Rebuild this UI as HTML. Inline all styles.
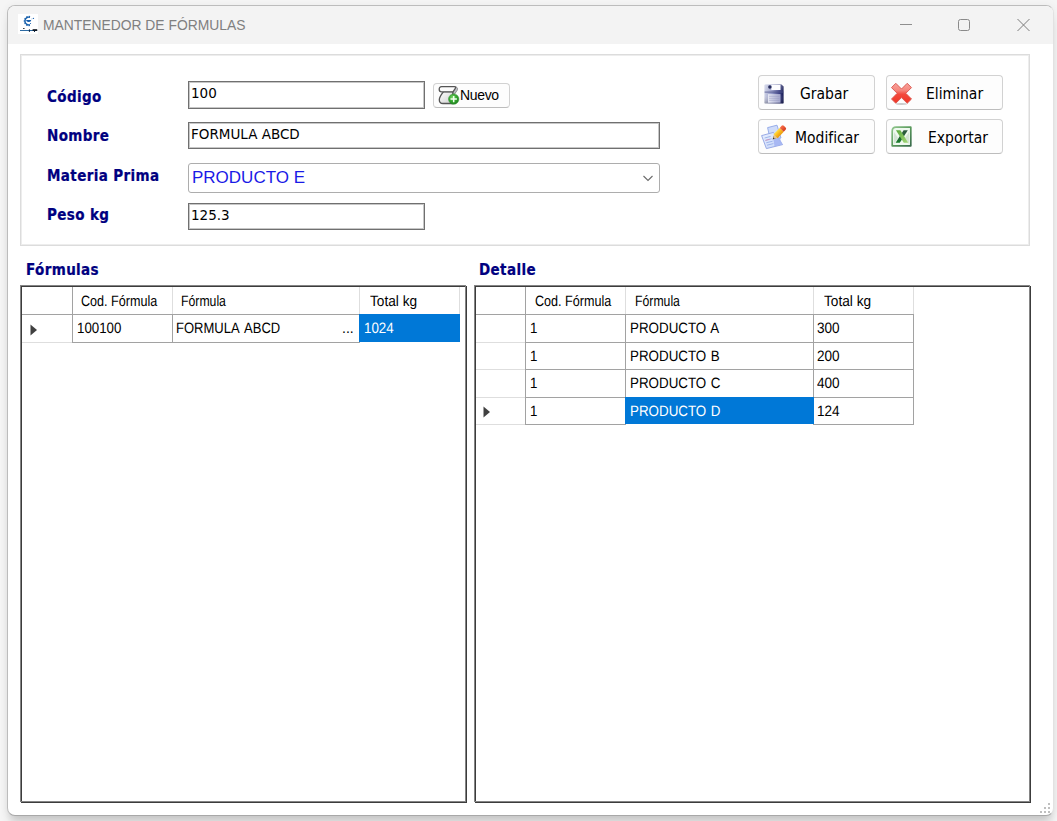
<!DOCTYPE html>
<html lang="es">
<head>
<meta charset="utf-8">
<title>MANTENEDOR DE FÓRMULAS</title>
<style>
html,body{margin:0;padding:0;}
body{width:1057px;height:821px;position:relative;overflow:hidden;background:#f5f5f5;font-family:"Liberation Sans",sans-serif;}
.abs{position:absolute;}
#win{position:absolute;left:7px;top:5px;width:1047px;height:811px;box-sizing:border-box;border:1px solid #bcbcbc;border-right-color:#e2e2e2;border-bottom-color:#a8a8a8;border-radius:8px;background:#fff;overflow:hidden;box-shadow:0 0 8px rgba(0,0,0,.05),0 10px 10px -3px rgba(0,0,0,.17);}
#titlebar{position:absolute;left:0;top:0;width:1045px;height:38px;background:#f3f3f3;}
#title{position:absolute;left:42.7px;top:15px;height:20px;line-height:20px;font-size:15.4px;transform:scaleX(.9);transform-origin:0 50%;color:#808080;white-space:nowrap;}
.tah{font-family:"DejaVu Sans Condensed","DejaVu Sans","Liberation Sans",sans-serif;}
.lbl{position:absolute;font-family:"DejaVu Sans Condensed","DejaVu Sans","Liberation Sans",sans-serif;font-weight:bold;color:#000080;font-size:15px;letter-spacing:.38px;-webkit-text-stroke:.22px #000080;line-height:20px;height:20px;white-space:nowrap;}
.tb{position:absolute;box-sizing:border-box;border:1px solid #707070;background:#fff;box-shadow:inset 0 0 0 1px rgba(0,0,0,.22);}
.tbt{position:absolute;font-family:"DejaVu Sans","Liberation Sans",sans-serif;font-size:13.5px;line-height:20px;height:20px;color:#000;white-space:nowrap;}
.btn{position:absolute;box-sizing:border-box;border:1px solid #d2d2d2;border-bottom-color:#bdbdbd;border-radius:4px;background:#fdfdfd;}
.btt{position:absolute;font-family:"DejaVu Sans Condensed","DejaVu Sans","Liberation Sans",sans-serif;font-size:15.5px;line-height:20px;height:20px;color:#000;white-space:nowrap;}
.grid{position:absolute;box-sizing:border-box;border:1px solid #3c3c3c;background:#fff;}
.grid2{position:absolute;box-sizing:border-box;border:1px solid #858585;background:transparent;}
.gt{position:absolute;font-size:15px;text-rendering:geometricPrecision;line-height:18px;height:18px;color:#000;white-space:nowrap;transform-origin:0 50%;}
.hl{position:absolute;height:1px;background:#a0a0a0;}
.vl{position:absolute;width:1px;background:#a0a0a0;}
.hll{position:absolute;height:1px;background:#dadada;}
.vll{position:absolute;width:1px;background:#dadada;}
</style>
</head>
<body>
<div id="win">
  <div id="titlebar"></div>
</div>
<!-- title bar contents (page coordinates) -->
<svg class="abs" style="left:18px;top:14px" width="20" height="20" viewBox="0 0 20 20">
  <rect width="20" height="20" fill="#fff"/>
  <path d="M11.9 3.25 A3.9 3.9 0 1 0 11.9 10.75" stroke="#1c63ad" stroke-width="1.3" fill="none"/>
  <path d="M12 2.85 A4.3 4.3 0 1 0 12 11.15" stroke="#1c63ad" stroke-width="1.7" fill="none" stroke-dasharray="1.3 1.0"/>
  <path d="M8 5.9 H13.3 Q12.8 8.1 10.4 8.1 Q8.6 8 8 5.9Z" fill="#145cab"/>
  <circle cx="15.4" cy="4.4" r=".7" fill="#2a6cb4"/><circle cx="13.8" cy="4.9" r=".45" fill="#5a90c8"/>
  <circle cx="12.5" cy="9.5" r=".6" fill="#1c63ad"/>
  <rect x="2" y="16" width="17.2" height="1" fill="#2c6aa2"/>
  <rect x="14.6" y="15.2" width="4.6" height="1.7" fill="#0a0e16"/>
  <rect x="10.9" y="15.4" width="1.1" height="2.4" fill="#0e2a4a"/>
  <rect x="16" y="16.8" width="1" height="1.2" fill="#0e2a4a"/>
  <rect x="5" y="14" width="1.6" height=".8" fill="#10151c"/>
</svg>
<div id="title">MANTENEDOR DE FÓRMULAS</div>
<svg class="abs" style="left:890px;top:10px" width="150" height="30" viewBox="0 0 150 30">
  <path d="M10 14.5 H22" stroke="#8e8e8e" stroke-width="1" fill="none"/>
  <rect x="68.5" y="9.5" width="11" height="11" rx="2" ry="2" stroke="#8a8a8a" stroke-width="1" fill="none"/>
  <path d="M127.5 9 L139.5 21 M139.5 9 L127.5 21" stroke="#7c7c7c" stroke-width="1" fill="none"/>
</svg>

<!-- top panel -->
<div class="abs" style="left:20px;top:54px;width:1010px;height:192px;box-sizing:border-box;border:1px solid #dcdcdc;box-shadow:inset 0 0 0 1px #ededed;"></div>

<div class="lbl" style="left:47px;top:87px">Código</div>
<div class="lbl" style="left:47px;top:126px">Nombre</div>
<div class="lbl" style="left:47px;top:166px">Materia Prima</div>
<div class="lbl" style="left:47px;top:205px">Peso kg</div>

<div class="tb" style="left:188px;top:81px;width:237px;height:28px"></div>
<div class="tbt" style="left:191px;top:83px">100</div>
<div class="tb" style="left:188px;top:122px;width:472px;height:27px"></div>
<div class="tbt" style="left:191px;top:124px">FORMULA ABCD</div>
<div class="abs" style="left:188px;top:163px;width:472px;height:30px;box-sizing:border-box;border:1px solid #adadad;border-radius:3px;background:#fff"></div>
<div class="abs" style="left:192px;top:167px;font-size:17px;line-height:22px;height:22px;color:#1a1ae6;white-space:nowrap">PRODUCTO E</div>
<svg class="abs" style="left:640px;top:170px" width="16" height="16" viewBox="0 0 16 16"><path d="M3.5 6 L8 10.5 L12.5 6" stroke="#6a6a6a" stroke-width="1.1" fill="none"/></svg>
<div class="tb" style="left:188px;top:203px;width:237px;height:27px"></div>
<div class="tbt" style="left:191px;top:205px">125.3</div>

<!-- Nuevo button -->
<div class="btn" style="left:433px;top:83px;width:77px;height:25px"></div>
<svg class="abs" style="left:437px;top:85px" width="24" height="22" viewBox="0 0 24 22">
  <defs><radialGradient id="gp" cx=".4" cy=".35" r=".75"><stop offset="0" stop-color="#7ad868"/><stop offset=".5" stop-color="#32a52e"/><stop offset="1" stop-color="#1b7a1b"/></radialGradient>
  <linearGradient id="sc" x1="0" y1="0" x2="1" y2="1"><stop offset="0" stop-color="#ffffff"/><stop offset="1" stop-color="#cfcfcf"/></linearGradient></defs>
  <path d="M17.4 1.6 C20.6 1.4 21.4 4.4 19.6 6.2 L16.6 10.4 L14.2 7.4 Z" fill="#b9bcc2" stroke="#7a7a7a" stroke-width=".8" stroke-linejoin="round"/>
  <path d="M6.6 6.6 C4.6 9 2.3 12 2.3 14.7 C2.3 17.1 3.9 18.5 6 18.5 H16 L15.8 6.6 Z" fill="url(#sc)" stroke="#555" stroke-width="1.3" stroke-linejoin="round"/>
  <path d="M4.6 1.6 H17.6 C19 1.6 18.6 3.2 17.8 4.2 L16 6.8 H4.6 C1.4 6.8 1.4 1.6 4.6 1.6 Z" fill="#fcfcfc" stroke="#555" stroke-width="1.3" stroke-linejoin="round"/>
  <circle cx="16.7" cy="14.1" r="5.2" fill="url(#gp)" stroke="#2a8a2a" stroke-width=".5"/>
  <path d="M16.7 10.9 V17.3 M13.5 14.1 H19.9" stroke="#f2fff0" stroke-width="1.5"/>
</svg>
<div class="abs" style="left:460px;top:86px;font-size:14px;letter-spacing:-.35px;line-height:18px;height:18px;white-space:nowrap;color:#000">Nuevo</div>

<!-- right buttons -->
<div class="btn" style="left:758px;top:75px;width:117px;height:35px"></div>
<div class="btn" style="left:886px;top:75px;width:117px;height:35px"></div>
<div class="btn" style="left:758px;top:119px;width:117px;height:35px"></div>
<div class="btn" style="left:886px;top:119px;width:117px;height:35px"></div>
<div class="btt" style="left:800px;top:84px">Grabar</div>
<div class="btt" style="left:926px;top:84px">Eliminar</div>
<div class="btt" style="left:795px;top:128px">Modificar</div>
<div class="btt" style="left:928px;top:128px">Exportar</div>


<!-- button icons -->
<svg class="abs" style="left:764px;top:84px" width="20" height="20" viewBox="0 0 20 20">
  <defs>
    <linearGradient id="fl" x1="0" y1="0" x2="1" y2="0"><stop offset="0" stop-color="#cdd1e6"/><stop offset=".4" stop-color="#9096c4"/><stop offset=".78" stop-color="#3b4084"/><stop offset="1" stop-color="#141850"/></linearGradient>
    <linearGradient id="fs" x1="0" y1="0" x2="1" y2="0"><stop offset="0" stop-color="#e6e8f3"/><stop offset="1" stop-color="#a3a6cc"/></linearGradient>
    <linearGradient id="fv" x1="0" y1="0" x2="0" y2="1"><stop offset="0" stop-color="#fff" stop-opacity=".25"/><stop offset=".5" stop-color="#fff" stop-opacity="0"/><stop offset="1" stop-color="#000" stop-opacity=".25"/></linearGradient>
  </defs>
  <path d="M1.6 .4 H17.4 L19.6 2.4 V18.4 Q19.6 19.6 18.4 19.6 H1.6 Q.4 19.6 .4 18.4 V1.6 Q.4 .4 1.6 .4Z" fill="url(#fl)"/>
  <path d="M1.6 .4 H17.4 L19.6 2.4 V18.4 Q19.6 19.6 18.4 19.6 H1.6 Q.4 19.6 .4 18.4 V1.6 Q.4 .4 1.6 .4Z" fill="url(#fv)"/>
  <rect x="7.3" y=".9" width="9.2" height="5.1" fill="#fdfdff"/>
  <circle cx="5.9" cy="2.9" r="1.75" fill="#262c5c"/>
  <rect x=".6" y="7.3" width="18.8" height="1.7" fill="#4a4f8a" opacity=".45"/>
  <rect x="4" y="10.1" width="12.5" height="8.6" fill="url(#fs)"/>
  <path d="M5 12.3 H15.5 M5 14.3 H15.5 M5 16.3 H15.5" stroke="#8a8db8" stroke-width=".6" opacity=".7"/>
</svg>
<svg class="abs" style="left:891px;top:83px" width="22" height="23" viewBox="0 0 22 23">
  <defs>
    <linearGradient id="rx" x1="0" y1="0" x2="0" y2="1"><stop offset="0" stop-color="#f7a39c"/><stop offset=".35" stop-color="#f6867c"/><stop offset=".55" stop-color="#f4493c"/><stop offset="1" stop-color="#ee3526"/></linearGradient>
  </defs>
  <ellipse cx="10.5" cy="21" rx="5.5" ry=".9" fill="#707070" opacity=".35"/>
  <path transform="translate(.5,.3)" d="M0 4.3 L4.3 0 L10 5.7 L15.7 0 L20 4.3 L14.3 10 L20 15.7 L15.7 20 L10 14.3 L4.3 20 L0 15.7 L5.7 10 Z" fill="url(#rx)" stroke="#d9544c" stroke-width=".9" stroke-linejoin="round"/>
</svg>
<svg class="abs" style="left:760px;top:124px" width="28" height="27" viewBox="0 0 28 27">
  <defs>
    <linearGradient id="pg" x1="0" y1="0" x2="1" y2="1"><stop offset="0" stop-color="#eaf1ff"/><stop offset="1" stop-color="#c2d2f8"/></linearGradient>
    <linearGradient id="py" x1="0" y1="0" x2="0" y2="1"><stop offset="0" stop-color="#ffe04a"/><stop offset=".5" stop-color="#fbb81c"/><stop offset="1" stop-color="#e89a10"/></linearGradient>
    <linearGradient id="pe" x1="0" y1="0" x2="0" y2="1"><stop offset="0" stop-color="#f8714c"/><stop offset="1" stop-color="#d43a1c"/></linearGradient>
  </defs>
  <path d="M7.6 3.6 L17 1.2 L21 14 L10.4 16.4 Z" fill="#cfdcfa" stroke="#8fa6e6" stroke-width=".9" stroke-linejoin="round"/>
  <path d="M1.6 11.6 L13.4 8.4 L22.6 20.6 L6.4 24.6 Z" fill="url(#pg)" stroke="#8fa2e2" stroke-width=".9" stroke-linejoin="round"/>
  <path d="M13 13.4 L19.4 13 L22.4 20.4 L14.6 22.4 Z" fill="#a3b4f2" opacity=".9"/>
  <path d="M4.6 14 L10.6 12.4 M5.4 16.4 L11.6 14.8 M6.2 18.8 L12.6 17.2 M7 21.2 L13.4 19.6" stroke="#8fa8e6" stroke-width=".8"/>
  <path d="M5.4 16.4 L9.6 15.3" stroke="#d78fb0" stroke-width=".8"/>
  <g transform="translate(12.6,15.4) rotate(-46.5)">
    <path d="M0 0 L3.2 -1.6 V1.6 Z" fill="#3c3a2c"/>
    <path d="M2 -1 L4.6 -2.7 V2.7 L2 1 Z" fill="#e6c48c"/>
    <rect x="4.4" y="-2.8" width="8.8" height="5.6" fill="url(#py)"/>
    <path d="M13.2 -2.8 H16 Q17.6 -2.8 17.6 -1.2 V1.2 Q17.6 2.8 16 2.8 H13.2 Z" fill="url(#pe)"/>
  </g>
</svg>
<svg class="abs" style="left:891px;top:126px" width="21" height="21" viewBox="0 0 21 21">
  <defs>
    <linearGradient id="xf" x1="0" y1="0" x2="1" y2="1"><stop offset="0" stop-color="#8fc58c"/><stop offset=".5" stop-color="#5a9a5c"/><stop offset="1" stop-color="#3a6b4c"/></linearGradient>
    <linearGradient id="xl" x1="0" y1="0" x2="1" y2="1"><stop offset="0" stop-color="#5aa83c"/><stop offset="1" stop-color="#a4d878"/></linearGradient>
    <linearGradient id="xd" x1="0" y1="0" x2="0" y2="1"><stop offset="0" stop-color="#2f5a40"/><stop offset=".5" stop-color="#235f33"/><stop offset="1" stop-color="#18802a"/></linearGradient>
  </defs>
  <path d="M1.2 19.8 V5 Q1.2 1.2 5 1.2 H19.8 V19.8 Z" fill="#eff9ef" stroke="url(#xf)" stroke-width="1.7" stroke-linejoin="round"/>
  <path d="M3 6 L7 12 L3 18 Z M18 6 L14 12 L18 18 Z" fill="#c8dcc8" opacity=".7"/>
  <path d="M12.6 4.2 H16.8 L8.8 16.8 H4.6 Z" fill="url(#xd)"/>
  <path d="M5 4.2 H9.4 L17.2 16.8 H12.8 Z" fill="url(#xl)"/>
</svg>
<!-- section labels -->
<div class="lbl" style="left:26px;top:260px">Fórmulas</div>
<div class="lbl" style="left:479px;top:260px">Detalle</div>

<!-- left grid -->
<div class="grid" style="left:21px;top:286px;width:446px;height:517px"></div><div class="grid2" style="left:20px;top:285px;width:446px;height:517px"></div>
<!-- right grid -->
<div class="grid" style="left:475px;top:286px;width:556px;height:517px"></div><div class="grid2" style="left:474px;top:285px;width:556px;height:517px"></div>
<!-- left grid contents -->
<div class="abs" style="left:22px;top:314px;width:438px;height:1px;background:#a2a2a2"></div>
<div class="abs" style="left:22px;top:342px;width:50px;height:1px;background:#dedede"></div>
<div class="abs" style="left:72px;top:342px;width:287px;height:1px;background:#a2a2a2"></div>
<div class="abs" style="left:72px;top:287px;width:1px;height:56px;background:#a2a2a2"></div>
<div class="abs" style="left:172px;top:287px;width:1px;height:27px;background:#dedede"></div>
<div class="abs" style="left:172px;top:314px;width:1px;height:29px;background:#a2a2a2"></div>
<div class="abs" style="left:359px;top:287px;width:1px;height:27px;background:#dedede"></div>
<div class="abs" style="left:359px;top:314px;width:1px;height:29px;background:#a2a2a2"></div>
<div class="abs" style="left:459px;top:287px;width:1px;height:27px;background:#dedede"></div>
<div class="abs" style="left:359px;top:314px;width:101px;height:28px;background:#0078d7"></div>
<svg class="abs" style="left:30px;top:324px" width="8" height="12" viewBox="0 0 8 12"><path d="M0.5 0.5 L7 6 L0.5 11.5 Z" fill="#404040"/></svg>
<div class="gt" style="left:81px;top:293px;color:#000;transform:scaleX(0.84)">Cod. Fórmula</div>
<div class="gt" style="left:180.5px;top:293px;color:#000;transform:scaleX(0.8167)">Fórmula</div>
<div class="gt" style="left:370px;top:293px;color:#000;transform:scaleX(0.91)">Total kg</div>
<div class="gt" style="left:77px;top:320px;color:#000;transform:scaleX(0.8867)">100100</div>
<div class="gt" style="left:176px;top:320px;color:#000;word-spacing:2.5px;transform:scaleX(0.868)">FORMULA ABCD</div>
<div class="gt" style="left:341.5px;top:320px;color:#000;transform:scaleX(0.9333)">...</div>
<div class="gt" style="left:364px;top:320px;color:#fff;transform:scaleX(0.8913)">1024</div>
<!-- right grid contents -->
<div class="abs" style="left:476px;top:314px;width:438px;height:1px;background:#a2a2a2"></div>
<div class="abs" style="left:476px;top:342px;width:49px;height:1px;background:#dedede"></div>
<div class="abs" style="left:525px;top:342px;width:389px;height:1px;background:#a2a2a2"></div>
<div class="abs" style="left:476px;top:369px;width:49px;height:1px;background:#dedede"></div>
<div class="abs" style="left:525px;top:369px;width:389px;height:1px;background:#a2a2a2"></div>
<div class="abs" style="left:476px;top:397px;width:49px;height:1px;background:#dedede"></div>
<div class="abs" style="left:525px;top:397px;width:389px;height:1px;background:#a2a2a2"></div>
<div class="abs" style="left:476px;top:424px;width:49px;height:1px;background:#dedede"></div>
<div class="abs" style="left:525px;top:424px;width:100px;height:1px;background:#a2a2a2"></div>
<div class="abs" style="left:814px;top:424px;width:100px;height:1px;background:#a2a2a2"></div>
<div class="abs" style="left:525px;top:287px;width:1px;height:138px;background:#a2a2a2"></div>
<div class="abs" style="left:625px;top:287px;width:1px;height:27px;background:#dedede"></div>
<div class="abs" style="left:625px;top:314px;width:1px;height:111px;background:#a2a2a2"></div>
<div class="abs" style="left:813px;top:287px;width:1px;height:27px;background:#dedede"></div>
<div class="abs" style="left:813px;top:314px;width:1px;height:111px;background:#a2a2a2"></div>
<div class="abs" style="left:913px;top:287px;width:1px;height:27px;background:#dedede"></div>
<div class="abs" style="left:913px;top:314px;width:1px;height:111px;background:#a2a2a2"></div>
<div class="abs" style="left:625px;top:397px;width:189px;height:27px;background:#0078d7"></div>
<svg class="abs" style="left:483px;top:406px" width="8" height="12" viewBox="0 0 8 12"><path d="M0.5 0.5 L7 6 L0.5 11.5 Z" fill="#404040"/></svg>
<div class="gt" style="left:534.5px;top:293px;color:#000;transform:scaleX(0.84)">Cod. Fórmula</div>
<div class="gt" style="left:634.5px;top:293px;color:#000;transform:scaleX(0.8167)">Fórmula</div>
<div class="gt" style="left:823.5px;top:293px;color:#000;transform:scaleX(0.91)">Total kg</div>
<div class="gt" style="left:530px;top:320px;color:#000;transform:scaleX(0.8867)">1</div>
<div class="gt" style="left:630px;top:320px;color:#000;word-spacing:1px;transform:scaleX(0.8913)">PRODUCTO A</div>
<div class="gt" style="left:817px;top:320px;color:#000;transform:scaleX(0.9053)">300</div>
<div class="gt" style="left:530px;top:348px;color:#000;transform:scaleX(0.8867)">1</div>
<div class="gt" style="left:630px;top:348px;color:#000;word-spacing:1px;transform:scaleX(0.8913)">PRODUCTO B</div>
<div class="gt" style="left:817px;top:348px;color:#000;transform:scaleX(0.9053)">200</div>
<div class="gt" style="left:530px;top:375px;color:#000;transform:scaleX(0.8867)">1</div>
<div class="gt" style="left:630px;top:375px;color:#000;word-spacing:1px;transform:scaleX(0.8913)">PRODUCTO C</div>
<div class="gt" style="left:817px;top:375px;color:#000;transform:scaleX(0.9053)">400</div>
<div class="gt" style="left:530px;top:403px;color:#000;transform:scaleX(0.8867)">1</div>
<div class="gt" style="left:630px;top:403px;color:#fff;word-spacing:1px;transform:scaleX(0.8913)">PRODUCTO D</div>
<div class="gt" style="left:817px;top:403px;color:#000;transform:scaleX(0.9053)">124</div>
<svg class="abs" style="left:1040px;top:802px" width="12" height="12" viewBox="0 0 12 12"><g fill="#bfbfbf"><rect x="8" y="1" width="2" height="2"/><rect x="4" y="5" width="2" height="2"/><rect x="8" y="5" width="2" height="2"/><rect x="0" y="9" width="2" height="2"/><rect x="4" y="9" width="2" height="2"/><rect x="8" y="9" width="2" height="2"/></g></svg>

</body>
</html>
